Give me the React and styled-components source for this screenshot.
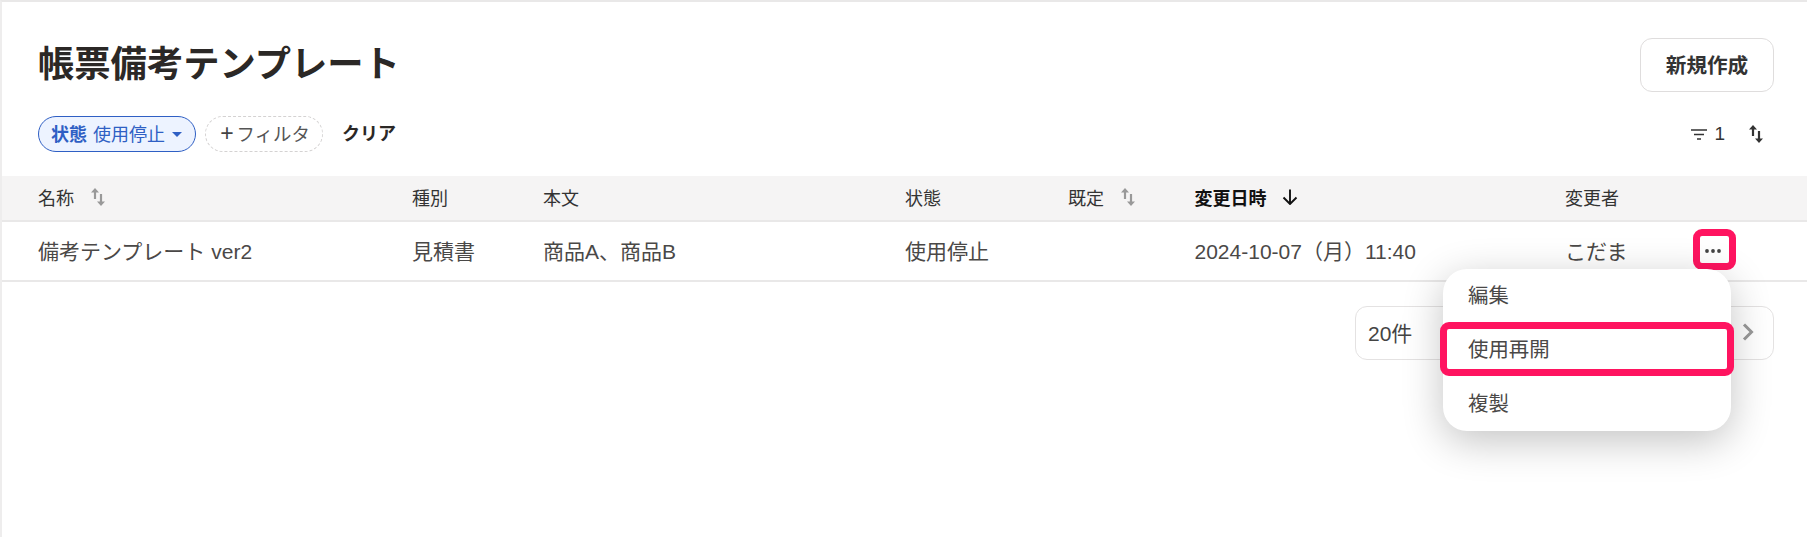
import React from "react";
import styled, { createGlobalStyle } from "styled-components";

const Global = createGlobalStyle`
  html, body { margin: 0; padding: 0; background: #fff; height: 100%; }
  body { font-family: "Liberation Sans", "Noto Sans CJK JP", sans-serif; color: #333; overflow: hidden; }
`;
const Page = styled.div`
  position: relative;
  width: 1807px;
  height: 537px;
  box-sizing: border-box;
  border-top: 2px solid #e9e8e8;
  border-left: 2px solid #eeeded;
  overflow: hidden;
`;
const TitleBar = styled.header`
  display: flex;
  justify-content: space-between;
  align-items: center;
  padding: 36px 33px 0 36px;
`;
const Title = styled.h1`
  margin: 0;
  font-size: 36.3px;
  font-weight: 700;
  line-height: 54px;
  color: #2b2826;
`;
const PrimaryButton = styled.button`
  width: 134px;
  height: 54px;
  box-sizing: border-box;
  padding: 0 0 3px;
  border: 1px solid #dfdddd;
  border-radius: 12px;
  background: #fff;
  font: 700 20.6px "Liberation Sans", "Noto Sans CJK JP", sans-serif;
  color: #333;
`;
const FilterBar = styled.div`
  display: flex;
  align-items: center;
  padding: 0 44px 0 36px;
  margin-top: 24px;
  height: 36px;
`;
const ActiveChip = styled.div`
  display: flex;
  align-items: center;
  width: 158px;
  height: 36px;
  box-sizing: border-box;
  padding: 0 0 3px 12px;
  border: 1px solid #2f5fc4;
  border-radius: 18px;
  background: #edf3ff;
  color: #2f5fc4;
  font-size: 18px;
`;
const ChipKey = styled.b`
  font-weight: 700;
  margin-right: 6px;
`;
const Caret = styled.span`
  width: 0;
  height: 0;
  margin-left: 7px;
  margin-top: 4px;
  border-left: 5.5px solid transparent;
  border-right: 5.5px solid transparent;
  border-top: 5.5px solid #2f5fc4;
`;
const AddChip = styled.div`
  display: flex;
  align-items: center;
  justify-content: center;
  width: 118px;
  height: 36px;
  box-sizing: border-box;
  padding: 0 0 2px 2px;
  margin-left: 9px;
  border: 1px dashed #d4d2d2;
  border-radius: 18px;
  color: #555;
  font-size: 18.4px;
`;
const Plus = styled.span`
  font-size: 23px;
  line-height: 1;
  margin-right: 3px;
  color: #444;
`;
const ClearLink = styled.span`
  margin: 0 0 5px 19px;
  font-size: 18px;
  font-weight: 700;
  color: #2b2826;
`;
const ViewControls = styled.div`
  margin-left: auto;
  display: flex;
  align-items: center;
  color: #333;
  font-size: 19px;
`;
const Count = styled.span`
  margin-left: 7px;
  margin-right: 24px;
`;
const Grid = styled.div`
  display: grid;
  grid-template-columns: 374px 131px 362px 163px 126.5px 370.5px 128px 1fr;
  align-items: center;
  box-sizing: border-box;
  padding-left: 36px;
  border-bottom: 2px solid #e9e8e8;
`;
const HeadRow = styled(Grid)`
  margin-top: 24px;
  height: 46px;
  padding-bottom: 2px;
  background: #f5f4f4;
  font-size: 18px;
  color: #333;
`;
const BodyRow = styled(Grid)`
  height: 60px;
  padding-bottom: 3px;
  font-size: 21px;
  color: #4a4847;
`;
const HeadCell = styled.div`
  display: flex;
  align-items: center;
  font-weight: ${(p) => (p.$active ? 700 : 400)};
  color: ${(p) => (p.$active ? "#111" : "#333")};
`;
const SortGlyph = styled.svg`
  display: block;
  flex: none;
  margin-left: ${(p) => p.$gap}px;
`;
const DotsButton = styled.div`
  width: 29px;
  height: 27px;
  display: flex;
  align-items: center;
  justify-content: center;
  background: #fff;
  margin: 3px 0 0 5px;
`;
const Pager = styled.div`
  margin: 24px 33px 0 auto;
  width: 419px;
  height: 54px;
  box-sizing: border-box;
  display: flex;
  align-items: center;
  justify-content: space-between;
  padding: 0 19px 2px 12px;
  border: 1px solid #e4e2e2;
  border-radius: 12px;
  font-size: 21px;
  color: #444;
`;
const Annotation = styled.div`
  position: absolute;
  box-sizing: border-box;
  border: 7px solid #ff1460;
  border-radius: 9px;
  pointer-events: none;
`;
const DotsMark = styled(Annotation)`
  left: 1691px;
  top: 227px;
  width: 43px;
  height: 41px;
`;
const Menu = styled.ul`
  position: absolute;
  left: 1441px;
  top: 267px;
  width: 288px;
  margin: 0;
  padding: 0;
  list-style: none;
  background: #fff;
  border-radius: 24px;
  box-shadow: 0 10px 40px rgba(0, 0, 0, 0.24);
`;
const MenuItem = styled.li`
  position: relative;
  height: 54px;
  box-sizing: border-box;
  display: flex;
  align-items: center;
  padding: 0 0 4px 25px;
  font-size: 20.4px;
  color: #4a4847;
`;
const ItemMark = styled(Annotation)`
  left: -3px;
  top: -1px;
  right: -3px;
  height: 54px;
`;

const Sort = ({ color, gap = 0 }) => (
  <SortGlyph $gap={gap} width="14" height="18" viewBox="0 0 14 18" fill={color}>
    <path d="M4 0L8 4.6H5.1V11H2.9V4.6H0z" />
    <path d="M10 18L14 13.4H11.1V6H8.9V13.4H6z" />
  </SortGlyph>
);

export default function App() {
  return (
    <>
      <Global />
      <Page>
        <TitleBar>
          <Title>帳票備考テンプレート</Title>
          <PrimaryButton>新規作成</PrimaryButton>
        </TitleBar>
        <FilterBar>
          <ActiveChip>
            <ChipKey>状態</ChipKey>使用停止<Caret />
          </ActiveChip>
          <AddChip>
            <Plus>+</Plus>フィルタ
          </AddChip>
          <ClearLink>クリア</ClearLink>
          <ViewControls>
            <svg width="16" height="11" viewBox="0 0 16 11" fill="none" stroke="#333" strokeWidth="1.6">
              <path d="M0 1h16M3 5.5h10M6 10h4" />
            </svg>
            <Count>1</Count>
            <Sort color="#333" />
          </ViewControls>
        </FilterBar>
        <HeadRow>
          <HeadCell>名称<Sort color="#999" gap={17} /></HeadCell>
          <HeadCell>種別</HeadCell>
          <HeadCell>本文</HeadCell>
          <HeadCell>状態</HeadCell>
          <HeadCell>既定<Sort color="#999" gap={17} /></HeadCell>
          <HeadCell $active>
            変更日時
            <svg style={{ marginLeft: 15 }} width="16" height="16" viewBox="0 0 16 16" fill="none" stroke="#111" strokeWidth="1.9">
              <path d="M8 0.5v14M1.5 8.5L8 15 14.5 8.5" />
            </svg>
          </HeadCell>
          <HeadCell>変更者</HeadCell>
          <HeadCell />
        </HeadRow>
        <BodyRow>
          <div>備考テンプレート ver2</div>
          <div>見積書</div>
          <div>商品A、商品B</div>
          <div>使用停止</div>
          <div />
          <div>2024-10-07（月）11:40</div>
          <div>こだま</div>
          <DotsButton>
            <svg width="16" height="4" viewBox="0 0 16 4" fill="#444">
              <circle cx="2" cy="2" r="1.9" />
              <circle cx="8" cy="2" r="1.9" />
              <circle cx="14" cy="2" r="1.9" />
            </svg>
          </DotsButton>
        </BodyRow>
        <Pager>
          <span>20件</span>
          <svg width="12" height="18" viewBox="0 0 12 18" fill="none" stroke="#999" strokeWidth="3">
            <path d="M2 1.5L9.5 9 2 16.5" />
          </svg>
        </Pager>
        <DotsMark />
        <Menu>
          <MenuItem>編集</MenuItem>
          <MenuItem>
            使用再開
            <ItemMark />
          </MenuItem>
          <MenuItem>複製</MenuItem>
        </Menu>
      </Page>
    </>
  );
}
